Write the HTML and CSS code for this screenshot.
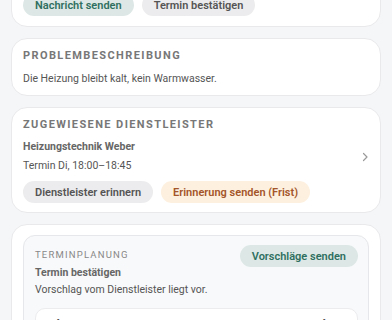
FILE: index.html
```html
<!DOCTYPE html>
<html lang="de">

<head>
    <meta charset="utf-8">
    <meta name="viewport" content="width=device-width, initial-scale=1.0">
    <title>Auftrag</title>
    <link rel="stylesheet" href="styles.css">
</head>

<body>
    <main class="page">
        <section class="card card-actions">
            <div class="chips">
                <button class="chip chip-green">Nachricht senden</button>
                <button class="chip chip-gray">Termin bestätigen</button>
            </div>
        </section>

        <section class="card">
            <h2 class="card-title">Problembeschreibung</h2>
            <p class="text">Die Heizung bleibt kalt, kein Warmwasser.</p>
        </section>

        <section class="card">
            <h2 class="card-title card-title-tight">Zugewiesene Dienstleister</h2>
            <div class="provider">
                <div class="provider-info">
                    <div class="name">Heizungstechnik Weber</div>
                    <div class="text">Termin Di, 18:00–18:45</div>
                </div>
                <svg class="chevron" width="8" height="10" viewBox="0 0 8 10">
                    <path d="M2.5 1.5 L6 5 L2.5 8.5" fill="none" stroke="#9a9a9a" stroke-width="1.2" stroke-linecap="round" stroke-linejoin="round"/>
                </svg>
            </div>
            <div class="chips">
                <button class="chip chip-gray">Dienstleister erinnern</button>
                <button class="chip chip-orange">Erinnerung senden (Frist)</button>
            </div>
        </section>

        <section class="card">
            <div class="plan">
                <div class="plan-head">
                    <div>
                        <div class="overline">Terminplanung</div>
                        <div class="name">Termin bestätigen</div>
                        <div class="text">Vorschlag vom Dienstleister liegt vor.</div>
                    </div>
                    <button class="chip chip-green">Vorschläge senden</button>
                </div>
                <div class="slot">
                    <span class="slot-time">Di, 18:00–18:45</span>
                    <span class="slot-state">Bestätigt ›</span>
                </div>
            </div>
        </section>
    </main>
</body>

</html>
```

FILE: styles.css
```css
body {
    background: #f5f6f8;
    color: #555;
    font-family: Roboto, "Noto Sans", sans-serif;
    margin: 0;
}

.page {
    display: flex;
    flex-direction: column;
    gap: 11px;
    margin-top: -37px;
    padding: 0 11px 40px;
}

.card {
    background: #fff;
    border: 1px solid #e9e9ec;
    border-radius: 16px;
    display: flex;
    flex-direction: column;
    padding: 10px 11px 9px;
}

.card-actions {
    padding: 30px 11px 10px;
}

.card-title {
    color: #777;
    font-size: 11px;
    font-weight: 700;
    letter-spacing: 1.4px;
    line-height: 14px;
    margin: 0 0 9px;
    text-transform: uppercase;
}

.card-title-tight {
    margin-bottom: 8px;
}

.text {
    font-size: 10.5px;
    line-height: 14px;
    margin: 0;
}

.name {
    color: #666;
    font-size: 10.5px;
    font-weight: 700;
    line-height: 14px;
}

.chips {
    display: flex;
    gap: 8px;
}

.chip {
    border: 0;
    border-radius: 11px;
    font-family: inherit;
    font-size: 11px;
    font-weight: 600;
    height: 22px;
    padding: 0 12px;
    white-space: nowrap;
}

.chip-green {
    background: #dde8e6;
    color: #2f6f60;
}

.chip-gray {
    background: #ececee;
    color: #555;
}

.chip-orange {
    background: #fdf0de;
    color: #a4552a;
}

.provider {
    align-items: center;
    display: flex;
    justify-content: space-between;
    margin-bottom: 8px;
}

.provider-info {
    display: flex;
    flex-direction: column;
    gap: 5px;
}

.plan {
    background: #f8f9fa;
    border: 1px solid #e6e7ea;
    border-radius: 12px;
    padding: 11px 10px 12px 11px;
}

.plan-head {
    align-items: flex-start;
    display: flex;
    justify-content: space-between;
}

.plan-head .chip {
    margin-top: -2px;
}

.overline {
    color: #888;
    font-size: 9.5px;
    letter-spacing: 1.2px;
    line-height: 12px;
    margin: 2px 0 5px;
    text-transform: uppercase;
}

.plan-head .text {
    margin-top: 3px;
}

.slot {
    background: #fff;
    border: 1px solid #ececef;
    border-radius: 10px;
    display: flex;
    justify-content: space-between;
    margin-top: 11px;
    padding: 8px 12px;
}

.slot-time,
.slot-state {
    color: #444;
    font-size: 13px;
    font-weight: 700;
}
```
